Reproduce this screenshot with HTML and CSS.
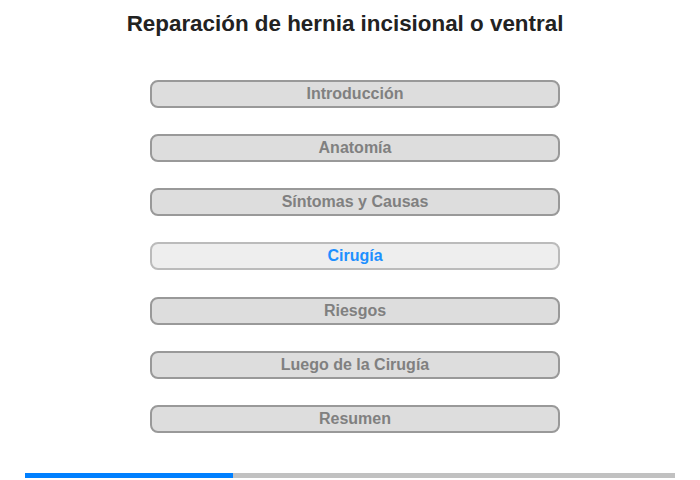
FILE: index.html
```html
<html>
<head>
    <meta charset="UTF-8">
    <title>Reparación de hernia incisional o ventral</title>
    <link rel="stylesheet" href="styles.css">
</head>
<body>
    <h1>Reparación de hernia incisional o ventral</h1>

    <div class="menu">
        <button class="item">Introducción</button>
        <button class="item">Anatomía</button>
        <button class="item">Síntomas y Causas</button>
        <button class="item active">Cirugía</button>
        <button class="item">Riesgos</button>
        <button class="item">Luego de la Cirugía</button>
        <button class="item">Resumen</button>
    </div>

    <div class="progress">
        <div class="progress-fill" style="width: 32%"></div>
    </div>
</body>
</html>
```

FILE: styles.css
```css
body {
    margin: 0;
    padding-top: 12px;
    font-family: "Liberation Sans", Arial, sans-serif;
    background: #ffffff;
}

h1 {
    margin: 0;
    text-align: center;
    font-size: 22.4px;
    line-height: 24px;
    color: #222222;
    padding-right: 10px;
}

.menu {
    display: flex;
    flex-direction: column;
    gap: 26.17px;
    width: 410px;
    margin: 44px 0 0 150px;
}

.item {
    height: 28px;
    padding: 0;
    border: 2px solid #999999;
    border-radius: 8px;
    background: #dddddd;
    color: #808080;
    font-family: "Liberation Sans", Arial, sans-serif;
    font-size: 16px;
    font-weight: bold;
    cursor: pointer;
}

.item.active {
    background: #eeeeee;
    border-color: #bbbbbb;
    color: #1e90ff;
}

.progress {
    height: 5px;
    margin: 40px 25px 0 25px;
    background: #c1c1c1;
}

.progress-fill {
    height: 100%;
    background: #0080ff;
}
```
